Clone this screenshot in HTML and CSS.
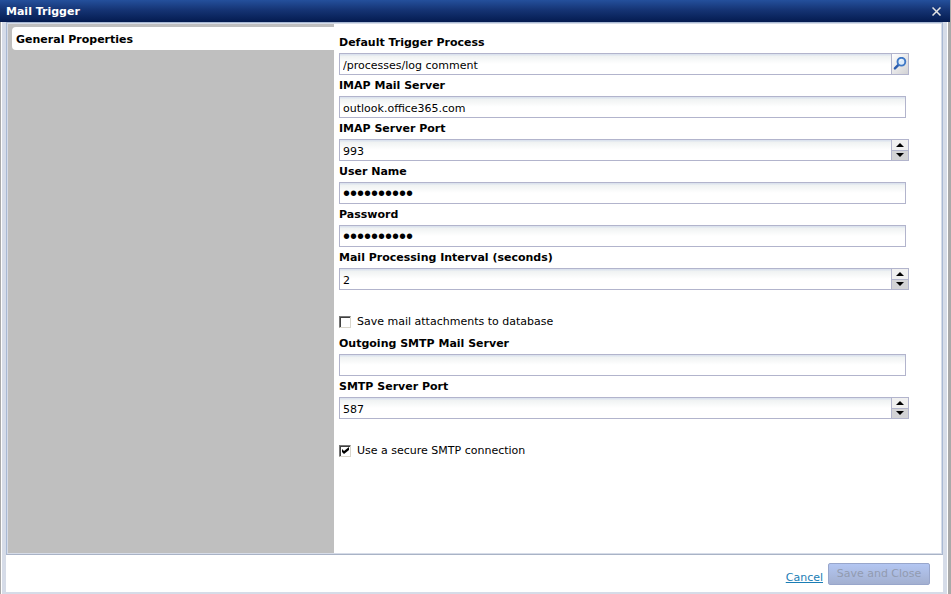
FILE: index.html
```html
<!DOCTYPE html>
<html lang="en">
<head>
    <meta charset="UTF-8">
    <meta name="viewport" content="width=device-width, initial-scale=1.0">
    <title>Mail Trigger</title>
    <link rel="stylesheet" href="styles.css">
</head>
<body>
    <div class="dialog">
        <header class="titlebar">
            <h1>Mail Trigger</h1>
            <button class="close" type="button" aria-label="Close">
                <svg width="9" height="9" viewBox="0 0 9 9"><path d="M0.5 0.5l8 8M8.5 0.5l-8 8" stroke="#e4e4e4" stroke-width="1.5"/></svg>
            </button>
        </header>
        <form class="window">
            <div class="panes">
                <nav class="sidebar">
                    <a class="tab" href="#general">General Properties</a>
                </nav>
                <main class="properties" id="general">
                    <div class="row">
                        <label for="process">Default Trigger Process</label>
                        <div class="field">
                            <input class="text" id="process" type="text" value="/processes/log comment">
                            <button class="search" type="button" aria-label="Browse">
                                <svg width="14" height="14" viewBox="0 0 14 14" fill="none">
                                    <path d="M5.4 7.8L1.9 11.4" stroke="#2c5cae" stroke-width="2.4" stroke-linecap="round"/>
                                    <circle cx="8.4" cy="4.7" r="3.9" fill="#dcebfa" stroke="#3f78c6" stroke-width="1.9"/>
                                    <path d="M6.6 4.2q.6-1.4 2-1.5" stroke="#fff"/>
                                </svg>
                            </button>
                        </div>
                    </div>
                    <div class="row">
                        <label for="imap">IMAP Mail Server</label>
                        <div class="field plain"><input class="text" id="imap" type="text" value="outlook.office365.com"></div>
                    </div>
                    <div class="row">
                        <label for="imap-port">IMAP Server Port</label>
                        <div class="field">
                            <input class="text" id="imap-port" type="text" value="993">
                            <div class="spinner">
                                <button type="button" aria-label="Increase"><svg width="8" height="4" viewBox="0 0 8 4"><path d="M4 0l4 4H0z"/></svg></button>
                                <button type="button" aria-label="Decrease"><svg width="8" height="4" viewBox="0 0 8 4"><path d="M0 0h8L4 4z"/></svg></button>
                            </div>
                        </div>
                    </div>
                    <div class="row">
                        <label for="user">User Name</label>
                        <div class="field plain"><input class="text masked" id="user" type="password" value="mailtriggr"></div>
                    </div>
                    <div class="row">
                        <label for="password">Password</label>
                        <div class="field plain"><input class="text masked" id="password" type="password" value="mailtriggr"></div>
                    </div>
                    <div class="row">
                        <label for="interval">Mail Processing Interval (seconds)</label>
                        <div class="field">
                            <input class="text" id="interval" type="text" value="2">
                            <div class="spinner">
                                <button type="button" aria-label="Increase"><svg width="8" height="4" viewBox="0 0 8 4"><path d="M4 0l4 4H0z"/></svg></button>
                                <button type="button" aria-label="Decrease"><svg width="8" height="4" viewBox="0 0 8 4"><path d="M0 0h8L4 4z"/></svg></button>
                            </div>
                        </div>
                    </div>
                    <div class="check">
                        <input id="attachments" type="checkbox">
                        <label for="attachments">Save mail attachments to database</label>
                    </div>
                    <div class="row">
                        <label for="smtp">Outgoing SMTP Mail Server</label>
                        <div class="field plain"><input class="text" id="smtp" type="text"></div>
                    </div>
                    <div class="row">
                        <label for="smtp-port">SMTP Server Port</label>
                        <div class="field">
                            <input class="text" id="smtp-port" type="text" value="587">
                            <div class="spinner">
                                <button type="button" aria-label="Increase"><svg width="8" height="4" viewBox="0 0 8 4"><path d="M4 0l4 4H0z"/></svg></button>
                                <button type="button" aria-label="Decrease"><svg width="8" height="4" viewBox="0 0 8 4"><path d="M0 0h8L4 4z"/></svg></button>
                            </div>
                        </div>
                    </div>
                    <div class="check">
                        <input id="secure" type="checkbox" checked>
                        <label for="secure">Use a secure SMTP connection</label>
                    </div>
                </main>
            </div>
            <footer class="actions">
                <a href="#cancel">Cancel</a>
                <button class="save" type="submit" disabled>Save and Close</button>
            </footer>
        </form>
    </div>
</body>
</html>
```

FILE: styles.css
```css
* { box-sizing: border-box; }
body { margin: 0; font-family: Verdana, "DejaVu Sans", sans-serif; font-size: 11px; color: #000; }
button, input { font: inherit; margin: 0; padding: 0; }
svg { display: block; }

.dialog { min-height: 100vh; display: flex; flex-direction: column; background: #a9a9a9; }

/* Title bar */
.titlebar { height: 22px; margin-right: 1px; padding: 0 9px 0 6px; display: flex; align-items: center; justify-content: space-between; background: linear-gradient(#24509c, #153474 45%, #041b50); }
.titlebar h1 { margin: 0; font-size: 11px; color: #fff; }
.close { border: 0; background: none; }

/* Window body */
.window { flex: 1; display: flex; flex-direction: column; margin: 0 3px 0 1px; padding: 0 4px 2px; border-left: 1px solid #fff; border-right: 1px solid #fff; background: #d6dce8; }
.panes { flex: 1; display: flex; border: 1px solid #a9b9d3; border-bottom-color: #a9b3c6; box-shadow: inset 0 0 0 1px #d6dce8; padding: 1px; }
.sidebar { flex: 0 0 326px; padding: 3px 0 0 4px; background: #bfbfbf; }
.tab { display: block; height: 23px; padding-left: 4px; line-height: 26px; border-radius: 4px 0 0 4px; background: #fff; color: #000; font-weight: bold; text-decoration: none; }

/* Form */
.properties { flex: 1; padding: 8px 32px 8px 5px; background: #fff; }
.row label { display: block; height: 21px; line-height: 21px; font-weight: bold; }
.field { display: flex; height: 22px; }
.plain { padding-right: 3px; }
.text { flex: 1; min-width: 0; padding: 3px 3px 0; border: 1px solid #b2b4cc; border-radius: 0; background: linear-gradient(#dce3ee 1px, #eff2f2 2px, #fff 10px); outline: none; }
.masked { padding-top: 0; font-family: "Liberation Sans", Arial, sans-serif; font-size: 20px; }
.search { width: 18px; margin-left: -1px; display: flex; align-items: center; justify-content: center; border: 1px solid #b2b4cc; background: linear-gradient(135deg, #fff, #d2d2d4); }
.spinner { width: 18px; margin-left: -1px; display: flex; flex-direction: column; border: 1px solid #b2b4cc; background: #b2b4cc; gap: 1px; }
.spinner button { flex: 1; display: flex; align-items: center; justify-content: center; border: 0; background: #f0f0f0; }
.spinner button + button { background: #d3d3d5; }
.check { height: 43px; padding-top: 20px; display: flex; align-items: center; gap: 6px; }
.check input { appearance: none; width: 12px; height: 12px; border: 1px solid; border-color: #777 #d9d6cc #d9d6cc #777; background: #fff; box-shadow: inset 1px 1px #404040; }
.check input:checked { background: #fff url("data:image/svg+xml,%3Csvg xmlns='http://www.w3.org/2000/svg' width='10' height='10'%3E%3Cpath d='M2 3l2 2 5-4v3L4 8 2 6z'/%3E%3C/svg%3E"); }

/* Footer */
.actions { height: 37px; padding: 0 13px 0 0; display: flex; align-items: center; justify-content: flex-end; gap: 5px; background: #fff; }
.actions a { padding-top: 8px; color: #1a7db5; }
.save { width: 102px; height: 22px; border: 1px solid #98a6cb; border-radius: 2px; background: linear-gradient(#b3c6f2, #a3b0d0); color: #929bb0; white-space: nowrap; }
```
